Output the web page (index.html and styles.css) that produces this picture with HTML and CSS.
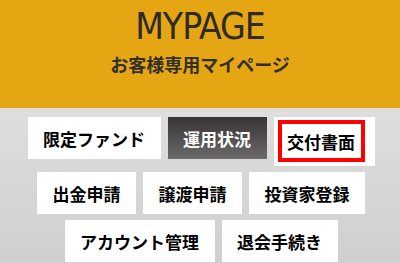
FILE: index.html
```html
<!DOCTYPE html>
<html lang="ja">
<head>
    <meta charset="UTF-8">
    <meta name="viewport" content="width=device-width, initial-scale=1.0">
    <title>MYPAGE</title>
    <link rel="stylesheet" href="styles.css">
</head>
<body>
    <header class="header">
        <h1 class="title">MYPAGE</h1>
        <p class="subtitle">お客様専用マイページ</p>
    </header>
    <nav class="menu">
        <div class="menu-row">
            <a class="menu-btn" href="#">限定ファンド</a>
            <a class="menu-btn active" href="#">運用状況</a>
            <a class="menu-btn focus" href="#"><span class="focus-box">交付書面</span></a>
        </div>
        <div class="menu-row">
            <a class="menu-btn" href="#">出金申請</a>
            <a class="menu-btn" href="#">譲渡申請</a>
            <a class="menu-btn" href="#">投資家登録</a>
        </div>
        <div class="menu-row">
            <a class="menu-btn" href="#">アカウント管理</a>
            <a class="menu-btn" href="#">退会手続き</a>
        </div>
    </nav>
</body>
</html>
```

FILE: styles.css
```css
body {
    margin: 0;
    height: 263px;
    overflow: hidden;
    font-family: "Noto Sans CJK JP", "Noto Sans", sans-serif;
    background: linear-gradient(to bottom, #e9e9e9, #cfcfcf);
}
.header {
    height: 108px;
    background: #e5a614;
    text-align: center;
    box-sizing: border-box;
    padding-top: 6px;
}
.title {
    margin: 0;
    font-family: "Liberation Sans Narrow", "DejaVu Sans Condensed", sans-serif;
    font-weight: normal;
    font-size: 37px;
    line-height: 42px;
    color: #2e2a27;
    letter-spacing: -1px;
}
.subtitle {
    margin: 4px 0 0;
    font-size: 18px;
    line-height: 24px;
    font-weight: bold;
    color: #332e2a;
}
.menu {
    display: flex;
    flex-direction: column;
    gap: 6px;
    padding-top: 9px;
}
.menu-row {
    display: flex;
    justify-content: center;
    gap: 7px;
    padding-left: 2px;
}
.menu-btn {
    display: flex;
    align-items: center;
    justify-content: center;
    height: 42px;
    padding: 0 15.5px;
    background: #fff;
    color: #000;
    font-size: 17px;
    font-weight: bold;
    text-decoration: none;
    white-space: nowrap;
}
.menu-btn.active {
    background: linear-gradient(to bottom, #383334, #6c6a6b);
    color: #fff;
}
.menu-btn.focus {
    padding: 3px 10px 4px 4px;
    align-items: stretch;
}
.focus-box {
    display: flex;
    align-items: center;
    border: 4px solid #f00;
    padding: 0 5.5px;
}
```
